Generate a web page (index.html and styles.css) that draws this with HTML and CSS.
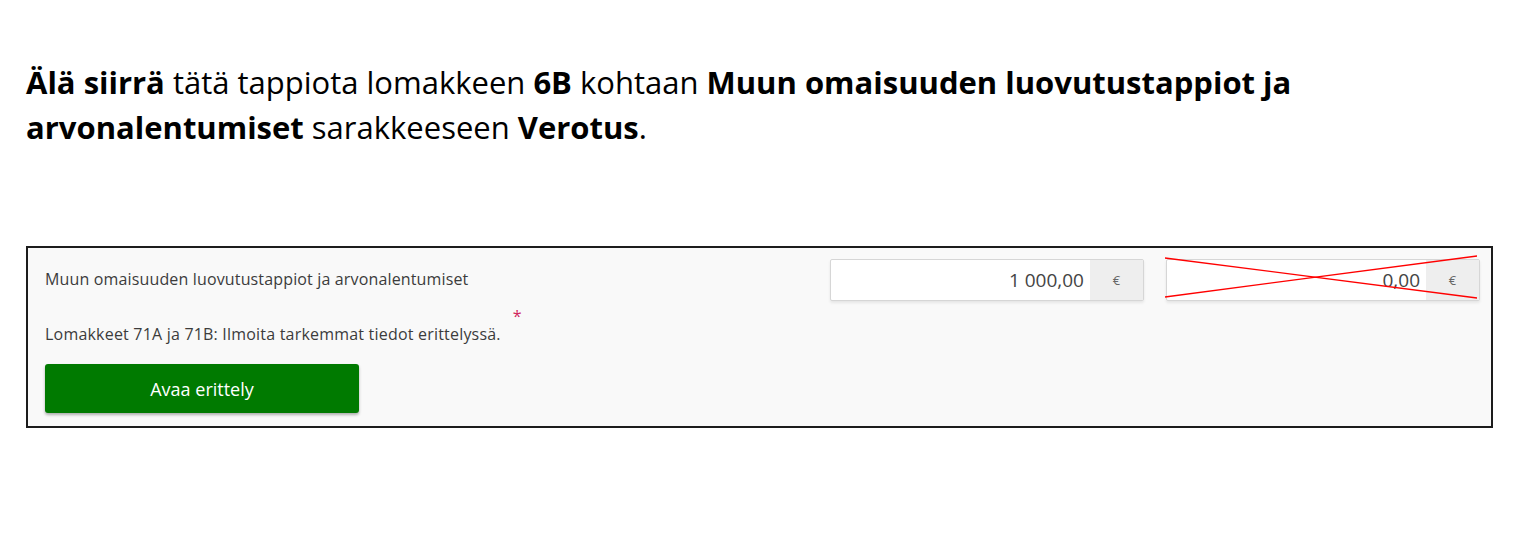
FILE: index.html
```html
<!DOCTYPE html>
<html lang="fi">
<head>
<meta charset="utf-8">
<title>Muun omaisuuden luovutustappiot</title>
<link rel="stylesheet" href="styles.css">
</head>
<body>
<main class="page">
  <p class="note"><strong>Älä siirrä</strong> tätä tappiota lomakkeen <strong>6B</strong> kohtaan <strong>Muun omaisuuden luovutustappiot ja arvonalentumiset</strong> sarakkeeseen <strong>Verotus</strong>.</p>
  <section class="panel">
    <div class="info">
      <div class="label">Muun omaisuuden luovutustappiot ja arvonalentumiset</div>
      <div class="hint-row">
        <span class="hint">Lomakkeet 71A ja 71B: Ilmoita tarkemmat tiedot erittelyssä.</span>
        <span class="req">*</span>
      </div>
      <button class="btn" type="button">Avaa erittely</button>
    </div>
    <div class="fields">
      <div class="field">
        <span class="value">1 000,00</span>
        <span class="unit">€</span>
      </div>
      <div class="field crossed">
        <span class="value">0,00</span>
        <span class="unit">€</span>
        <svg class="cross" viewBox="0 0 314 42" preserveAspectRatio="none" aria-hidden="true">
          <line x1="0" y1="0" x2="312" y2="40" />
          <line x1="0" y1="39" x2="312" y2="-2" />
        </svg>
      </div>
    </div>
  </section>
</main>
</body>
</html>
```
FILE: styles.css
```css
html, body {
  margin: 0;
  padding: 0;
  background: #ffffff;
}

.page {
  padding: 60px 30px 0 26px;
}

.note {
  margin: 0 0 96px 0;
  font-family: "Open Sans", "Noto Sans", sans-serif;
  font-size: 31px;
  line-height: 45px;
  color: #000;
  width: 1320px;
}

.note strong {
  font-weight: 700;
}

.panel {
  box-sizing: border-box;
  width: 1467px;
  height: 182px;
  border: 2px solid #1c1c1c;
  background: #f9f9f9;
  display: flex;
  justify-content: space-between;
  padding: 11px 11px 0 17px;
  font-family: "Open Sans", "Noto Sans", sans-serif;
  color: #3c3c3c;
}

.info {
  display: flex;
  flex-direction: column;
}

.label {
  font-size: 16px;
  line-height: 20px;
  margin-top: 10px;
  letter-spacing: 0.15px;
}

.hint-row {
  display: flex;
  align-items: flex-start;
  margin-top: 19px;
}

.hint {
  font-size: 16px;
  line-height: 20px;
  margin-top: 16px;
  letter-spacing: 0.2px;
}

.req {
  color: #d0265e;
  font-size: 16px;
  line-height: 16px;
  margin-left: 12px;
  margin-top: 0;
}

.btn {
  margin-top: 20px;
  width: 314px;
  height: 49px;
  border: none;
  border-radius: 3px;
  background: #007a00;
  color: #ffffff;
  font-family: "Open Sans", "Noto Sans", sans-serif;
  font-size: 18px;
  box-shadow: 0 2px 3px rgba(0, 0, 0, 0.3);
  padding: 0;
}

.fields {
  display: flex;
  gap: 22px;
  align-items: flex-start;
}

.field {
  position: relative;
  box-sizing: border-box;
  width: 314px;
  height: 42px;
  display: flex;
  background: #ffffff;
  border: 1px solid #d6d6d6;
  border-radius: 2px;
  box-shadow: 0 2px 3px rgba(0, 0, 0, 0.08);
}

.value {
  flex: 1;
  text-align: right;
  padding-right: 6px;
  font-size: 19px;
  line-height: 40px;
  color: #444;
}

.unit {
  width: 53px;
  background: #eeeeee;
  text-align: center;
  font-size: 13px;
  line-height: 40px;
  color: #666;
}

.cross {
  position: absolute;
  left: -2px;
  top: -2px;
  width: 314px;
  height: 42px;
  overflow: visible;
}

.cross line {
  stroke: #ff0000;
  stroke-width: 1.3;
}
```
